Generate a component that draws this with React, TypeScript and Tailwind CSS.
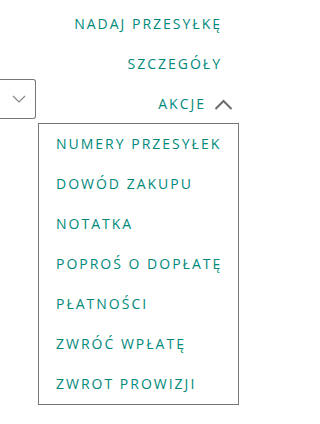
const menuItems = [
  "NUMERY PRZESYŁEK",
  "DOWÓD ZAKUPU",
  "NOTATKA",
  "POPROŚ O DOPŁATĘ",
  "PŁATNOŚCI",
  "ZWRÓĆ WPŁATĘ",
  "ZWROT PROWIZJI",
];

const linkClass =
  "text-[14px] leading-5 tracking-[2px] text-[#00897b] whitespace-nowrap";

export default function App() {
  return (
    <div
      className="relative w-[258px] h-[424px] bg-white overflow-hidden"
      style={{ fontFamily: '"Open Sans", sans-serif' }}
    >
      <div className="flex flex-col pt-[14px]">
        <a className={`${linkClass} self-end mr-[36px]`}>NADAJ PRZESYŁKĘ</a>
        <a className={`${linkClass} self-end mr-[36px] mt-5`}>SZCZEGÓŁY</a>

        {/* select + actions row */}
        <div className="flex justify-between items-start mt-[5px]">
          <div className="w-[36px] h-[40px] border border-l-0 border-[#767676] rounded-r-[3px] flex items-center justify-center pl-[2px]">
            <svg width="14" height="8" viewBox="0 0 14 8" fill="none">
              <polyline
                points="1,1 7,7 13,1"
                stroke="#888"
                strokeWidth="1.2"
              />
            </svg>
          </div>
          <button className="flex items-center mt-[15px] mr-[25px]">
            <span className={linkClass}>AKCJE</span>
            <svg
              className="ml-[8px]"
              width="19"
              height="11"
              viewBox="0 0 19 11"
              fill="none"
            >
              <polyline
                points="1.5,10 9.5,2 17.5,10"
                stroke="#6b6b6b"
                strokeWidth="2"
              />
            </svg>
          </button>
        </div>
      </div>

      {/* dropdown menu */}
      <div className="absolute left-[38px] top-[123px] w-[201px] border border-[#767676] bg-white">
        {menuItems.map((item) => (
          <div key={item} className="h-10 flex items-center px-[17px]">
            <span className={linkClass}>{item}</span>
          </div>
        ))}
      </div>
    </div>
  );
}
